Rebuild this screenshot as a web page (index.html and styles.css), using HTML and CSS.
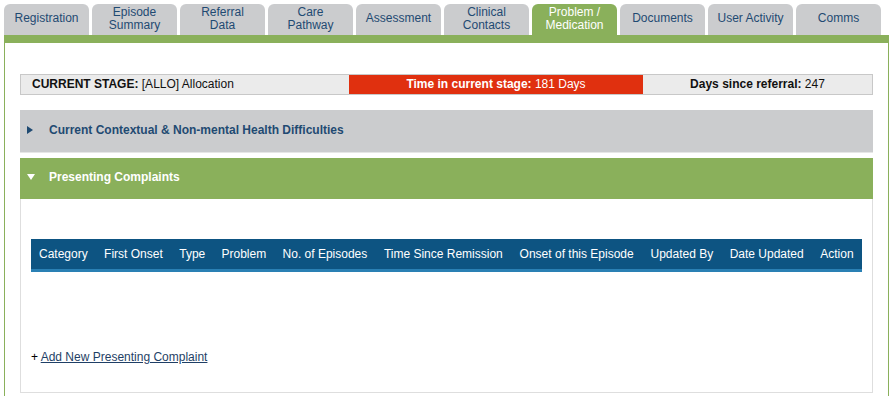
FILE: index.html
```
<!DOCTYPE html>
<html lang="en">
<head>
    <meta charset="UTF-8">
    <title>Problem / Medication</title>
    <link rel="stylesheet" href="styles.css">
</head>
<body>
    <nav class="tabs">
        <a class="tab" href="#">Registration</a>
        <a class="tab" href="#">Episode<br>Summary</a>
        <a class="tab" href="#">Referral<br>Data</a>
        <a class="tab" href="#">Care<br>Pathway</a>
        <a class="tab" href="#">Assessment</a>
        <a class="tab" href="#">Clinical<br>Contacts</a>
        <a class="tab active" href="#">Problem /<br>Medication</a>
        <a class="tab" href="#">Documents</a>
        <a class="tab" href="#">User Activity</a>
        <a class="tab" href="#">Comms</a>
    </nav>
    <div class="tab-bar"></div>

    <div class="content">
        <div class="stage">
            <div class="stage-cell stage-name"><b>CURRENT STAGE:</b> [ALLO] Allocation</div>
            <div class="stage-cell stage-time"><b>Time in current stage:</b> 181 Days</div>
            <div class="stage-cell stage-days"><b>Days since referral:</b> 247</div>
        </div>

        <div class="section collapsed">
            <span class="arrow-right"></span><span>Current Contextual &amp; Non-mental Health Difficulties</span>
        </div>

        <div class="section open">
            <span class="arrow-down"></span><span>Presenting Complaints</span>
        </div>
        <div class="panel">
            <table class="grid">
                <thead>
                    <tr>
                        <th>Category</th>
                        <th>First Onset</th>
                        <th>Type</th>
                        <th>Problem</th>
                        <th>No. of Episodes</th>
                        <th>Time Since Remission</th>
                        <th>Onset of this Episode</th>
                        <th>Updated By</th>
                        <th>Date Updated</th>
                        <th>Action</th>
                    </tr>
                </thead>
            </table>
            <p class="add">+ <a href="#">Add New Presenting Complaint</a></p>
        </div>
    </div>
</body>
</html>
```

FILE: styles.css
```
body {
    margin: 0;
    font-family: "Liberation Sans", Arial, sans-serif;
    font-size: 12px;
    background-color: #fff;
}

.tabs {
    display: flex;
    gap: 3px;
    padding: 4px 0 0 4px;
}

.tab {
    width: 85px;
    height: 31px;
    display: flex;
    align-items: center;
    justify-content: center;
    text-align: center;
    line-height: 13px;
    padding-bottom: 2px;
    box-sizing: border-box;
    background-color: #cbccce;
    color: #1f4a72;
    text-decoration: none;
    border-radius: 6px 6px 0 0;
}

.tab.active {
    background-color: #8ab05b;
    color: #fff;
}

.tab-bar {
    height: 8px;
    margin-left: 4px;
    width: 885px;
    background-color: #8ab05b;
}

.content {
    margin-left: 4px;
    width: 853px;
    padding: 31px 15px 3px 15px;
    border-left: 1px solid #8ab05b;
    border-right: 1px solid #8ab05b;
}

.stage {
    display: flex;
    height: 19px;
    border: 1px solid #c8c8c8;
    background-color: #ebebeb;
    color: #111;
}

.stage-cell {
    line-height: 19px;
}

.stage-name {
    width: 317px;
    padding-left: 11px;
}

.stage-time {
    width: 294px;
    text-align: center;
    background-color: #e0300f;
    color: #fff;
}

.stage-days {
    flex: 1;
    text-align: center;
}

.section {
    display: flex;
    align-items: center;
    height: 42px;
    padding-left: 7px;
    padding-bottom: 3px;
    box-sizing: border-box;
    font-weight: bold;
}

.arrow-right {
    width: 0;
    height: 0;
    margin-right: 16px;
    border-top: 4px solid transparent;
    border-bottom: 4px solid transparent;
    border-left: 6px solid #1f4a72;
}

.arrow-down {
    width: 0;
    height: 0;
    margin-right: 14px;
    border-left: 4px solid transparent;
    border-right: 4px solid transparent;
    border-top: 6px solid #fff;
}

.collapsed {
    margin-top: 15px;
    height: 43px;
    background-color: #cbccce;
    color: #1f4a72;
    border-bottom: 1px solid #e6e6e6;
}

.open {
    margin-top: 5px;
    height: 41px;
    background-color: #8ab05b;
    color: #fff;
}

.panel {
    height: 194px;
    padding: 40px 10px 0 10px;
    border: 1px solid #dedede;
    border-top: none;
    box-sizing: border-box;
}

.grid {
    width: 100%;
    border-collapse: collapse;
    background-color: #0d5482;
    border-bottom: 3px solid #2a80b4;
}

.grid th {
    height: 30px;
    padding: 0 8px;
    font-weight: normal;
    color: #fff;
    text-align: left;
    white-space: nowrap;
}

.add {
    margin: 78px 0 0 0;
    color: #000;
}

.add a {
    color: #1f3f66;
}
```
